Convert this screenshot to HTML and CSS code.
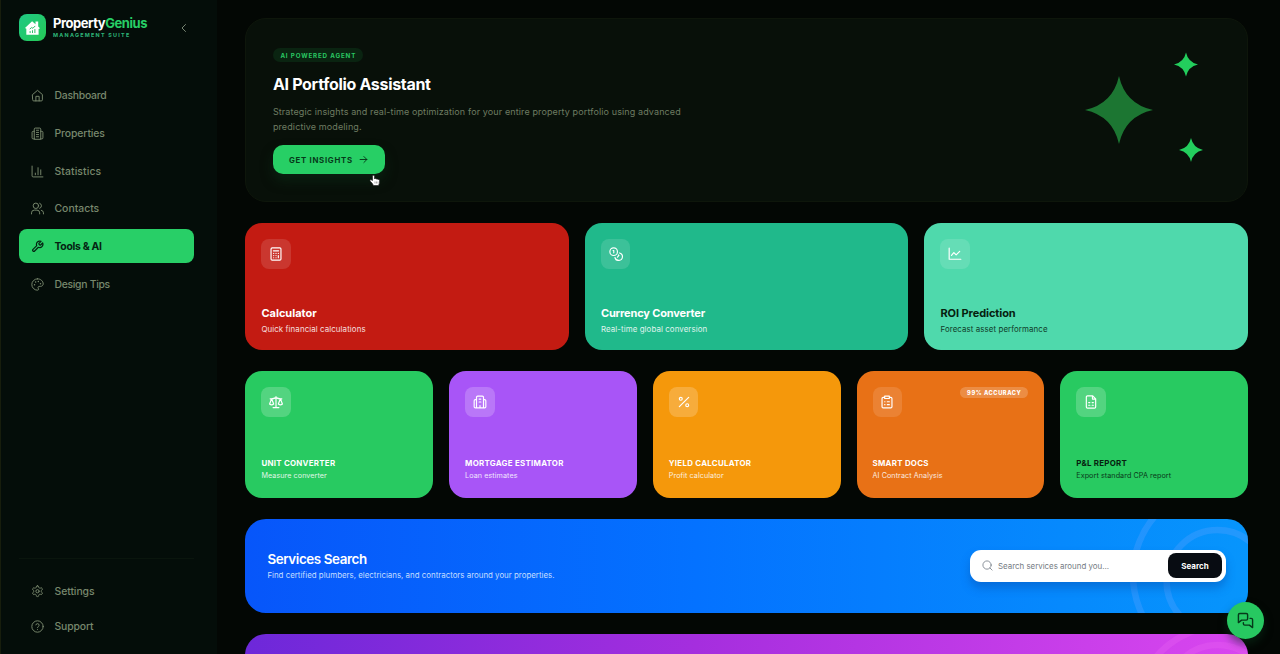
FILE: index.html
```html
<!DOCTYPE html>
<html lang="en">
<head>
<meta charset="utf-8">
<title>PropertyGenius</title>
<link rel="stylesheet" href="styles.css">
</head>
<body>
<div class="app">
  <aside class="sidebar">
    <div class="brand">
      <div class="brand-mark">
        <svg viewBox="0 0 24 24" width="19" height="19"><path d="M2.500 12.500 11.500 4l4.300 3.800V4.500h3.400v6.300l2.300 2.200-1.800 1V21H4.200v-7.300z" fill="#fff"/><path d="M9 19v-2.500M12 19v-3.500M15 19v-5M8.500 14l2.500-2 1.500 1 3-3" stroke="#24bd62" stroke-width="1.200" fill="none"/></svg>
      </div>
      <div class="brand-text">
        <div class="brand-name">Property<span>Genius</span></div>
        <div class="brand-sub">MANAGEMENT SUITE</div>
      </div>
      <svg class="icon collapse" viewBox="0 0 24 24"><path d="m15 19-7-7 7-7"/></svg>
    </div>
    <nav class="nav">
      <a class="nav-item"><svg class="icon" viewBox="0 0 24 24"><path d="M3 10.200 12 2.500l9 7.700V20a2 2 0 0 1-2 2H5a2 2 0 0 1-2-2z"/><path d="M9 22v-8.500h6V22"/></svg><span class="w-dash">Dashboard</span></a>
      <a class="nav-item"><svg class="icon" viewBox="0 0 24 24"><path d="M6 22V4a2 2 0 0 1 2-2h8a2 2 0 0 1 2 2v18zM6 8H4a2 2 0 0 0-2 2v10a2 2 0 0 0 2 2h2M18 8h2a2 2 0 0 1 2 2v10a2 2 0 0 1-2 2h-2M10 6h4M10 10h4M10 14h4M10 18h4"/></svg><span class="w-prop">Properties</span></a>
      <a class="nav-item"><svg class="icon" viewBox="0 0 24 24"><path d="M2 2v18a2 2 0 0 0 2 2h18M8 18v-3M13 18V5M18 18V9"/></svg><span class="w-stat">Statistics</span></a>
      <a class="nav-item"><svg class="icon" viewBox="0 0 24 24"><path d="M16 22v-2a5 5 0 0 0-5-5H6a5 5 0 0 0-5 5v2M23 22v-2a5 5 0 0 0-4-4.800M16 2.300a5 5 0 0 1 0 9.400"/><circle cx="9" cy="7" r="5"/></svg><span>Contacts</span></a>
      <a class="nav-item active"><svg class="icon" viewBox="0 0 24 24"><path d="M14.700 6.300a1 1 0 0 0 0 1.400l1.600 1.600a1 1 0 0 0 1.400 0l3.800-3.800a6 6 0 0 1-7.900 7.900l-6.900 6.900a2.100 2.100 0 0 1-3-3l6.900-6.900a6 6 0 0 1 7.900-7.900z"/></svg><span class="w-tool">Tools &amp; AI</span></a>
      <a class="nav-item"><svg class="icon" viewBox="0 0 24 24"><path d="M12 1.500a10.500 10.500 0 0 0 0 21c1.200 0 2-1 2-2 0-.6-.2-1-.5-1.400-1.300-1.600-.1-3.600 1.500-3.600h2.500c3 0 5-2.400 5-4.500 0-5.300-4.700-9.500-10.500-9.500z"/><path d="M6.500 12.500h.1M8.500 7.500h.1M13.500 6.500h.1M17.500 10.500h.1" stroke-width="2.600"/></svg><span class="w-tips">Design Tips</span></a>
    </nav>
    <div class="nav-footer">
      <a class="nav-item"><svg class="icon" viewBox="0 0 24 24"><path d="M12.200 1.500h-.4a2 2 0 0 0-2 2v.2a2 2 0 0 1-1 1.700l-.4.3a2 2 0 0 1-2 0l-.2-.1a2 2 0 0 0-2.700.7l-.2.4a2 2 0 0 0 .7 2.700l.2.1a2 2 0 0 1 1 1.700v.5a2 2 0 0 1-1 1.700l-.2.1a2 2 0 0 0-.7 2.700l.2.4a2 2 0 0 0 2.700.7l.2-.1a2 2 0 0 1 2 0l.4.3a2 2 0 0 1 1 1.700v.2a2 2 0 0 0 2 2h.4a2 2 0 0 0 2-2v-.2a2 2 0 0 1 1-1.700l.4-.3a2 2 0 0 1 2 0l.2.1a2 2 0 0 0 2.700-.7l.2-.4a2 2 0 0 0-.7-2.700l-.2-.1a2 2 0 0 1-1-1.700v-.5a2 2 0 0 1 1-1.700l.2-.1a2 2 0 0 0 .7-2.700l-.2-.4a2 2 0 0 0-2.700-.7l-.2.1a2 2 0 0 1-2 0l-.4-.3a2 2 0 0 1-1-1.700v-.2a2 2 0 0 0-2-2z"/><circle cx="12" cy="11.500" r="3"/></svg><span class="w-sett">Settings</span></a>
      <a class="nav-item"><svg class="icon" viewBox="0 0 24 24"><circle cx="12" cy="12" r="10.500"/><path d="M9 9a3 3 0 0 1 5.900 1c0 2-2.900 2.300-2.900 4M12 17.500h.1"/></svg><span class="w-supp">Support</span></a>
    </div>
  </aside>

  <main class="main">
    <section class="hero">
      <div class="pill"><span>AI POWERED AGENT</span></div>
      <h1>AI Portfolio Assistant</h1>
      <p>Strategic insights and real-time optimization for your entire property portfolio using advanced<br>predictive modeling.</p>
      <button class="cta"><span>GET INSIGHTS</span><svg class="icon" viewBox="0 0 24 24"><path d="M3 12h18M13 4l8 8-8 8"/></svg></button>
      <svg class="stars" viewBox="0 0 120 112" width="120" height="112">
        <defs><path id="star" d="M0-50Q9-9 50 0 9 9 0 50-9 9-50 0-9-9 0-50z"/></defs>
        <use href="#star" transform="translate(34 58) scale(.68)" fill="#1c7632"/>
        <use href="#star" transform="translate(101 12.500) scale(.24)" fill="#23ce5d"/>
        <use href="#star" transform="translate(106 98) scale(.24)" fill="#23ce5d"/>
      </svg>
      <svg class="cursor" viewBox="0 0 24 24" width="12" height="13"><path d="M7 12V3.500a2 2 0 0 1 4 0V9l1-1c1.500-.5 2.500 0 3 1 1.500-.5 2.500 0 3 1.200 1.500-.4 3 .2 3 2V17l-2 5H9l-3-5-4-4c-.500-2 1.500-3 3-2z" fill="#fff" stroke="#222" stroke-width="1.300"/><path d="M12 14v4M15 14v4M18 14v4" stroke="#555"/></svg>
    </section>

    <section class="grid three">
      <article class="card red"><div class="tile"><svg class="icon" viewBox="0 0 24 24"><rect x="3.500" y="1.500" width="17" height="21" rx="2"/><path d="M7.500 6.500h9M8 11h.1M12 11h.1M16 11h.1M8 14.700h.1M12 14.700h.1M8 18.400h.1M12 18.400h.1M16 14.700v3.700"/></svg></div><div><h2>Calculator</h2><p>Quick financial calculations</p></div></article>
      <article class="card teal"><div class="tile"><svg class="icon" viewBox="0 0 24 24"><circle cx="8" cy="8" r="6.500"/><path d="M18 10.200A6.500 6.500 0 1 1 10.200 18M7 6h1.200v4M16 13.500l1 1-2.500 3"/></svg></div><div><h2 class="t-curr">Currency Converter</h2><p>Real-time global conversion</p></div></article>
      <article class="card mint dark"><div class="tile"><svg class="icon" viewBox="0 0 24 24"><path d="M2 2v19h20M6 14.500l4-5 4 4 6-6"/></svg></div><div><h2 class="t-roi">ROI Prediction</h2><p>Forecast asset performance</p></div></article>
    </section>

    <section class="grid five">
      <article class="card green"><div class="tile"><svg class="icon" viewBox="0 0 24 24"><path d="m16 15.500 3.500-9 3.500 9c-2 1.700-5 1.700-7 0zM1 15.500l3.500-9 3.500 9c-2 1.700-5 1.700-7 0zM7 21.500h10M12 2.500v19M2 6.500h2c2.500 0 6-1 8-2 2 1 5.500 2 8 2h2"/></svg></div><div><h3>UNIT CONVERTER</h3><p>Measure converter</p></div></article>
      <article class="card purple"><div class="tile"><svg class="icon" viewBox="0 0 24 24"><path d="M6 22V4a2 2 0 0 1 2-2h8a2 2 0 0 1 2 2v18zM6 8H4a2 2 0 0 0-2 2v10a2 2 0 0 0 2 2h2M18 8h2a2 2 0 0 1 2 2v10a2 2 0 0 1-2 2h-2M10.500 7h3M10.500 12h3M12 18v4"/></svg></div><div><h3>MORTGAGE ESTIMATOR</h3><p>Loan estimates</p></div></article>
      <article class="card amber"><div class="tile"><svg class="icon" viewBox="0 0 24 24"><path d="M20 4 4 20"/><circle cx="6.500" cy="6.500" r="2.500"/><circle cx="17.500" cy="17.500" r="2.500"/></svg></div><div><h3>YIELD CALCULATOR</h3><p>Profit calculator</p></div></article>
      <article class="card orange"><div class="tile"><svg class="icon" viewBox="0 0 24 24"><path d="M8 4H5.500A2 2 0 0 0 3.500 6v14a2 2 0 0 0 2 2h13a2 2 0 0 0 2-2V6a2 2 0 0 0-2-2H16M8 2h8v4H8zM12.500 11.500h3.500M12.500 16.500h3.500M8 11.500h.5M8 16.500h.5"/></svg></div><div class="badge"><span>99% ACCURACY</span></div><div><h3>SMART DOCS</h3><p>AI Contract Analysis</p></div></article>
      <article class="card green dark"><div class="tile"><svg class="icon" viewBox="0 0 24 24"><path d="M15 1.500H6a2 2 0 0 0-2 2v17a2 2 0 0 0 2 2h12a2 2 0 0 0 2-2v-14zM14.500 1.500V7H20M8 13h2M14 13h2M8 17.500h2M14 17.500h2"/></svg></div><div><h3>P&amp;L REPORT</h3><p>Export standard CPA report</p></div></article>
    </section>

    <section class="services">
      <svg class="rings" viewBox="0 0 120 94" width="120" height="94"><circle cx="95" cy="56" r="90"/><circle cx="89.500" cy="62" r="51"/></svg>
      <div class="services-text"><h2>Services Search</h2><p>Find certified plumbers, electricians, and contractors around your properties.</p></div>
      <div class="search">
        <svg class="icon" viewBox="0 0 24 24"><circle cx="11" cy="11" r="9"/><path d="m22 22-4.500-4.500"/></svg>
        <span class="placeholder">Search services around you...</span>
        <button><span>Search</span></button>
      </div>
    </section>
    <section class="promo"><svg class="rings" viewBox="0 0 120 94" width="120" height="94"><circle cx="95" cy="80" r="88"/><circle cx="89.500" cy="62" r="51"/></svg></section>
  </main>
  <button class="fab"><svg class="icon" viewBox="0 0 24 24"><path d="M15 9.500a2 2 0 0 1-2 2H6.500L2 15V4a2 2 0 0 1 2-2h9a2 2 0 0 1 2 2zM18.500 9H20a2 2 0 0 1 2 2v11l-4.500-3.500H11a2 2 0 0 1-2-2V15"/></svg></button>
</div>
</body>
</html>
```
FILE: styles.css
```css
* { box-sizing: border-box; }
body { margin: 0; background: #030704; font-family: Inter, "Liberation Sans", sans-serif; color: #fff; overflow: hidden; }
h1, h2, h3, p { margin: 0; }
button { border: 0; padding: 0; font-family: inherit; }
span, h1, h2, h3, p { white-space: nowrap; }
.icon { fill: none; stroke: currentColor; stroke-width: 2; stroke-linecap: round; stroke-linejoin: round; flex: none; display: block; }
.app { display: flex; height: 654px; overflow: hidden; }

/* Sidebar */
.sidebar { width: 217px; flex: none; background: #040d09; display: flex; flex-direction: column; padding: 14px 23px 11px 18px; border-left: 1px solid #171d0c; }
.brand { display: flex; align-items: center; height: 27px; }
.brand-mark { width: 27px; height: 27px; border-radius: 8px; background: linear-gradient(135deg, #20c985, #25c955); display: flex; align-items: center; justify-content: center; margin-right: 7px; }
.brand-text { flex: 1; }
.brand-name { font-size: 13px; line-height: 16px; font-weight: 700; letter-spacing: -.44px; margin-top: -1px; }
.brand-name span { color: #27cf66; }
.brand-sub { font-size: 5.400px; line-height: 8px; font-weight: 700; color: #2db577; letter-spacing: 1.250px; white-space: nowrap; }
.collapse { width: 12px; height: 12px; color: #84927f; margin-right: 4px; stroke-width: 1.800; }
.nav { display: flex; flex-direction: column; gap: 3.700px; margin-top: 37.700px; }
.nav-item { display: flex; align-items: center; gap: 10.500px; height: 34px; padding: 0 12px; border-radius: 8px; color: #78886d; font-size: 10.400px; font-weight: 500; }
.nav-item .icon { width: 13px; height: 13px; stroke-width: 1.800; }
.nav-item.active { background: #28cf67; color: #052312; font-weight: 700; }
.nav-item.active .icon { stroke-width: 2.200; }
.w-dash { letter-spacing: -.24px; }
.w-prop { letter-spacing: -.1px; }
.w-stat { letter-spacing: .1px; }
.w-tool { letter-spacing: -.3px; }
.w-tips { letter-spacing: -.3px; }
.w-sett { letter-spacing: -.06px; }
.w-supp { letter-spacing: -.12px; }
.nav-footer { margin-top: auto; border-top: 1px solid #0a150d; padding-top: 15px; display: flex; flex-direction: column; gap: 1px; }

/* Main column */
.main { flex: 1; padding: 18px 32px 0 28.400px; display: flex; flex-direction: column; gap: 21.500px; min-width: 0; }
.hero { position: relative; flex: none; height: 183.500px; border: 1px solid #0e160b; border-radius: 21px; background: #081009; padding: 29px 26.500px; display: flex; flex-direction: column; align-items: flex-start; }
.pill { flex: none; height: 14px; padding: 0 7.500px; border-radius: 7px; background: #0a2411; color: #29c762; display: flex; align-items: center; width: 90px; font-size: 6.200px; font-weight: 700; letter-spacing: .86px; }
.hero h1 { font-size: 16px; line-height: 22px; font-weight: 700; letter-spacing: -.31px; margin-top: 10.500px; }
.hero p { font-size: 9px; line-height: 15.500px; letter-spacing: .117px; color: #6e7c62; margin-top: 9px; }
.cta { flex: none; width: 112px; height: 29px; border-radius: 10px; background: #27cf65; color: #06391a; display: flex; align-items: center; gap: 6px; padding-left: 16px; margin-top: 10.500px; box-shadow: 0 7px 12px #0b2b1699; font-size: 7.800px; font-weight: 700; letter-spacing: .74px; }
.cta .icon { width: 9px; height: 9px; stroke-width: 2.500; }
.stars { position: absolute; left: 838.500px; top: 33px; }
.cursor { position: absolute; left: 122.500px; top: 155px; }

/* Tool cards */
.grid { display: grid; gap: 16px; flex: none; }
.three { grid-template-columns: repeat(3, 1fr); }
.five { grid-template-columns: repeat(5, 1fr); }
.card { position: relative; height: 126.500px; border-radius: 17px; padding: 16px; display: flex; flex-direction: column; justify-content: space-between; }
.tile { width: 29.500px; height: 29.500px; border-radius: 8px; background: #ffffff33; display: flex; align-items: center; justify-content: center; }
.tile .icon { width: 14px; height: 14px; color: #fff; }
.card h2 { font-size: 11px; line-height: 15px; font-weight: 700; }
.card .t-curr { letter-spacing: -.15px; }
.card .t-roi { letter-spacing: -.08px; }
.card h2 + p { font-size: 7.900px; line-height: 12px; letter-spacing: .09px; margin-top: 2px; margin-bottom: -1px; opacity: .85; }
.card h3 { font-size: 7.900px; line-height: 12px; font-weight: 700; letter-spacing: .27px; }
.card h3 + p { font-size: 7.200px; line-height: 10px; letter-spacing: .07px; margin-top: 2px; margin-bottom: .3px; opacity: .85; }
.dark { color: #06210f; }
.red { background: #c31b12; }
.red .tile, .orange .tile, .teal .tile, .mint .tile { background: #ffffff20; }
.teal { background: #20b98b; }
.mint { background: #4fd9ac; }
.green { background: #28ca61; }
.purple { background: #a855f7; }
.amber { background: #f5980b; }
.orange { background: #e87116; }
.badge { position: absolute; right: 16px; top: 16px; width: 68px; height: 11px; border-radius: 6px; background: #ffffff33; display: flex; align-items: center; justify-content: center; font-size: 5.700px; font-weight: 800; letter-spacing: .55px; }

/* Services banner */
.services { position: relative; flex: none; height: 93.500px; border-radius: 21px; overflow: hidden; background: linear-gradient(90deg, #0756fa, #0472ff 45%, #0795fc); display: flex; align-items: center; justify-content: space-between; padding: 0 22px; }
.services h2 { font-size: 13.400px; line-height: 18px; font-weight: 600; letter-spacing: -.4px; margin-top: -1px; }
.services p { font-size: 7.900px; line-height: 12px; margin-top: 1px; color: #c4deff; }
.rings { position: absolute; right: 0; top: 0; fill: none; stroke: #53a1ff; stroke-opacity: .36; stroke-width: 6.500; }
.search { position: relative; width: 256px; height: 32px; border-radius: 11px; background: #fff; display: flex; align-items: center; padding: 0 4px 0 12px; box-shadow: 0 6px 10px #0646a466; }
.search .icon { width: 11px; height: 11px; color: #747d87; stroke-width: 1.800; }
.placeholder { flex: 1; margin-left: 5px; color: #747b83; font-size: 7.900px; }
.search button { width: 54px; height: 25px; border-radius: 8px; background: #080c12; color: #fff; font-size: 8px; font-weight: 700; }
.promo { position: relative; flex: none; height: 94px; border-radius: 21px; background: linear-gradient(90deg, #6d28d9, #a52ede 45%, #d946ef); overflow: hidden; }
.promo .rings { stroke: #f06cf5; stroke-opacity: .25; }
.fab { position: absolute; left: 1227px; top: 601.500px; width: 37px; height: 37px; border-radius: 50%; background: #27c861; color: #06391a; display: flex; align-items: center; justify-content: center; box-shadow: 0 5px 9px #0a321b88; }
.fab .icon { width: 17px; height: 17px; }
```
